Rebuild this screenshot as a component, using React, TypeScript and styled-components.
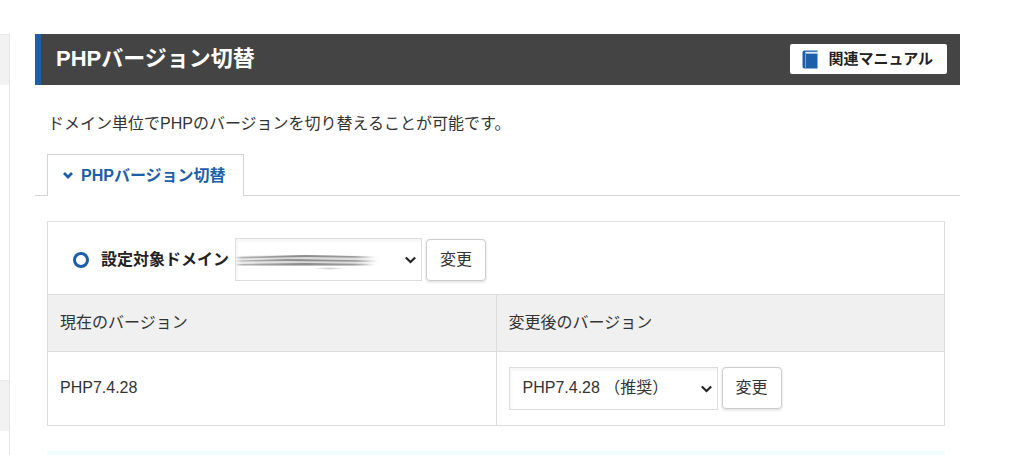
import React from "react";
import styled, { createGlobalStyle } from "styled-components";

const GlobalStyle = createGlobalStyle`
  *, *::before, *::after { box-sizing: border-box; }
  body {
    margin: 0;
    background: #fff;
    color: #333;
    font-family: "Liberation Sans", "Noto Sans CJK JP", sans-serif;
    font-size: 16px;
    line-height: 24px;
  }
  button, select { font: inherit; color: inherit; }
`;

const Page = styled.div`
  display: flex;
  height: 100vh;
  padding: 34px 64px 0 0;
  overflow: hidden;
`;

const Sidebar = styled.aside`
  flex: 0 0 10px;
  display: flex;
  flex-direction: column;
  justify-content: space-between;
  padding-bottom: 24px;
  border-right: 1px solid #e4e4e4;
`;

const SideHeading = styled.div`
  height: 51px;
  background: #f2f2f2;
  border-top: 1px solid #e8e8e8;
`;

const Main = styled.main`
  flex: 1;
  min-width: 0;
  display: flex;
  flex-direction: column;
  margin-left: 25px;
`;

const TitleBar = styled.header`
  display: flex;
  align-items: center;
  justify-content: space-between;
  padding: 10px 13px 11px 15px;
  background: #444;
  border-left: 6px solid #1b5faa;
`;

const Title = styled.h1`
  margin: 0;
  color: #fff;
  font-size: 22px;
  line-height: 28px;
  font-weight: bold;
`;

const ManualLink = styled.a`
  display: flex;
  align-items: center;
  gap: 10px;
  height: 30px;
  padding: 0 14px 0 12px;
  background: #fff;
  border-radius: 2px;
  color: #222;
  font-size: 15px;
  font-weight: bold;
  text-decoration: none;
`;

const Lead = styled.p`
  margin: 27px 13px 18px;
`;

const Tabs = styled.nav`
  display: flex;
  padding-left: 12px;
  border-bottom: 1px solid #d4d4d4;
`;

const Tab = styled.a`
  display: flex;
  align-items: center;
  gap: 8px;
  height: 42px;
  margin-bottom: -1px;
  padding: 0 17px 0 15px;
  background: #fff;
  border: 1px solid #d4d4d4;
  border-bottom: 0;
  color: #1b5faa;
  font-weight: bold;
  text-decoration: none;
`;

const Panel = styled.section`
  margin: 25px 15px 0 12px;
  border: 1px solid #ddd;
`;

const ControlRow = styled.form<{ $inset?: boolean }>`
  display: flex;
  align-items: center;
  gap: 4px;
  padding: ${(p) => (p.$inset ? "16px 25px 13px" : "0")};
`;

const DomainLabel = styled.label`
  display: flex;
  align-items: center;
  gap: 12px;
  margin-right: 2px;
  color: #222;
  font-weight: bold;
`;

const Ring = styled.span`
  width: 16px;
  height: 16px;
  border: 3px solid #1b5faa;
  border-radius: 50%;
`;

const SelectBox = styled.div<{ $width: number }>`
  position: relative;
  width: ${(p) => p.$width}px;
`;

const Select = styled.select`
  display: block;
  width: 100%;
  height: 43px;
  padding: 0 36px 0 13px;
  appearance: none;
  background: #fff;
  border: 1px solid #ddd;
  border-radius: 0;
  box-shadow: inset 2px 3px 2px #f7f7f7;
`;

const Arrow = styled.svg`
  position: absolute;
  top: 17px;
  right: 6px;
  pointer-events: none;
`;

const Smudge = styled.svg`
  position: absolute;
  top: 13px;
  left: 1px;
  pointer-events: none;
`;

const Button = styled.button`
  width: 60px;
  height: 42px;
  padding: 0;
  background: #fff;
  border: 1px solid #ccc;
  border-radius: 4px;
  box-shadow: 0 1px 3px rgba(0, 0, 0, 0.15);
`;

const Versions = styled.table`
  width: 100%;
  table-layout: fixed;
  border-collapse: collapse;
  text-align: left;

  th, td { padding: 0 12px; border-top: 1px solid #ddd; }
  th { height: 57px; background: #f0f0f0; font-weight: normal; }
  td { height: 73px; }
  th + th, td + td { border-left: 1px solid #ddd; }
`;

const Notice = styled.div`
  flex: 1;
  margin: 25px 15px 0 12px;
  background: #f0fdff;
`;

function SelectArrow() {
  return (
    <Arrow width="11" height="10" viewBox="0 0 11 10" aria-hidden="true">
      <path d="M0.8 2.5L5.5 7L10.2 2.5" fill="none" stroke="#222" strokeWidth="2.1" />
    </Arrow>
  );
}

function BookIcon() {
  return (
    <svg width="16" height="19" viewBox="0 0 16 19" aria-hidden="true">
      <path d="M2.5 0.5H15.5V2H3.5V3.5H15.5V18.5H2.5Q0.5 18.5 0.5 16.5V2.5Q0.5 0.5 2.5 0.5Z" fill="#1b5faa" />
      <path d="M3.5 4V18.5" stroke="#7aa5d2" strokeWidth="1" />
      <path d="M3.5 2.5H15.5" stroke="#dce8f4" strokeWidth="1.4" />
    </svg>
  );
}

function HiddenDomain() {
  return (
    <Smudge width="150" height="24" viewBox="0 0 150 24" aria-hidden="true">
      <defs>
        <filter id="smear" x="-5%" y="-50%" width="110%" height="200%">
          <feGaussianBlur stdDeviation="2 0.6" />
        </filter>
        <linearGradient id="fade" x1="0" x2="1">
          <stop offset="0" stopColor="#777" stopOpacity="0.45" />
          <stop offset="0.45" stopColor="#777" stopOpacity="0.8" />
          <stop offset="0.85" stopColor="#777" stopOpacity="0.65" />
          <stop offset="1" stopColor="#777" stopOpacity="0" />
        </linearGradient>
      </defs>
      <g filter="url(#smear)" fill="url(#fade)">
        <path d="M2 5L60 4L141 5V14.5H2Z" opacity="0.35" />
        <path d="M2 6L70 4L138 5.5V7L70 6L2 7.5Z" />
        <path d="M2 9.5L50 8L141 9.5V11L50 10L2 10.5Z" />
        <path d="M2 13L70 12L138 13V14.5H2Z" />
        <path d="M78 17.5L92 16.5L110 17.5L92 18.5Z" opacity="0.4" />
      </g>
    </Smudge>
  );
}

const keepOnPage = (e: React.FormEvent) => e.preventDefault();

export default function App() {
  return (
    <>
      <GlobalStyle />
      <Page>
        <Sidebar>
          <SideHeading />
          <SideHeading />
        </Sidebar>
        <Main>
          <TitleBar>
            <Title>PHPバージョン切替</Title>
            <ManualLink href="#manual">
              <BookIcon />
              関連マニュアル
            </ManualLink>
          </TitleBar>
          <Lead>ドメイン単位でPHPのバージョンを切り替えることが可能です。</Lead>
          <Tabs>
            <Tab href="#switch">
              <svg width="10" height="9" viewBox="0 0 10 9" aria-hidden="true">
                <path d="M1 2L5 6L9 2" fill="none" stroke="#1b5faa" strokeWidth="2.8" />
              </svg>
              PHPバージョン切替
            </Tab>
          </Tabs>
          <Panel>
            <ControlRow $inset onSubmit={keepOnPage}>
              <DomainLabel htmlFor="domain">
                <Ring />
                設定対象ドメイン
              </DomainLabel>
              <SelectBox $width={187}>
                <Select id="domain">
                  <option value="" />
                </Select>
                <HiddenDomain />
                <SelectArrow />
              </SelectBox>
              <Button type="submit">変更</Button>
            </ControlRow>
            <Versions>
              <thead>
                <tr>
                  <th scope="col">現在のバージョン</th>
                  <th scope="col">変更後のバージョン</th>
                </tr>
              </thead>
              <tbody>
                <tr>
                  <td>PHP7.4.28</td>
                  <td>
                    <ControlRow onSubmit={keepOnPage}>
                      <SelectBox $width={209}>
                        <Select aria-label="変更後のバージョン">
                          <option>PHP7.4.28 （推奨）</option>
                        </Select>
                        <SelectArrow />
                      </SelectBox>
                      <Button type="submit">変更</Button>
                    </ControlRow>
                  </td>
                </tr>
              </tbody>
            </Versions>
          </Panel>
          <Notice />
        </Main>
      </Page>
    </>
  );
}
